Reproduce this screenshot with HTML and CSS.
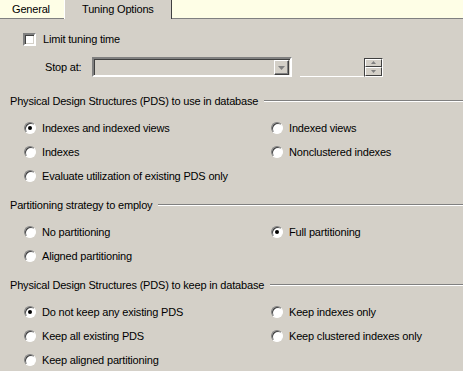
FILE: index.html
```html
<!DOCTYPE html>
<html>
<head>
<meta charset="utf-8">
<link rel="stylesheet" href="styles.css">
</head>
<body>
<div class="tabs">
  <div class="tab">General</div>
  <div class="tab active">Tuning Options</div>
  <div class="tab-fill"></div>
</div>

<div class="check-row">
  <span class="checkbox"></span>
  <span class="label">Limit tuning time</span>
</div>

<div class="stop-row">
  <span class="stop-label">Stop at:</span>
  <div class="combo">
    <div class="combo-btn">
      <svg width="7" height="4" viewBox="0 0 7 4"><path d="M0 0h7L3.5 4z" fill="#808080"/></svg>
    </div>
  </div>
  <div class="spin-text"></div>
  <div class="spin">
    <div class="spin-btn"><svg width="5" height="3" viewBox="0 0 5 3"><path d="M2.5 0L5 3H0z" fill="#808080"/></svg></div>
    <div class="spin-btn"><svg width="5" height="3" viewBox="0 0 5 3"><path d="M0 0h5L2.5 3z" fill="#808080"/></svg></div>
  </div>
</div>

<div class="group-head first"><span>Physical Design Structures (PDS) to use in database</span><span class="rule"></span></div>
<div class="options">
  <div class="opt"><span class="radio on"></span>Indexes and indexed views</div>
  <div class="opt"><span class="radio"></span>Indexed views</div>
  <div class="opt"><span class="radio"></span>Indexes</div>
  <div class="opt"><span class="radio"></span>Nonclustered indexes</div>
  <div class="opt"><span class="radio"></span>Evaluate utilization of existing PDS only</div>
</div>

<div class="group-head"><span>Partitioning strategy to employ</span><span class="rule"></span></div>
<div class="options">
  <div class="opt"><span class="radio"></span>No partitioning</div>
  <div class="opt"><span class="radio on"></span>Full partitioning</div>
  <div class="opt"><span class="radio"></span>Aligned partitioning</div>
</div>

<div class="group-head"><span>Physical Design Structures (PDS) to keep in database</span><span class="rule"></span></div>
<div class="options">
  <div class="opt"><span class="radio on"></span>Do not keep any existing PDS</div>
  <div class="opt"><span class="radio"></span>Keep indexes only</div>
  <div class="opt"><span class="radio"></span>Keep all existing PDS</div>
  <div class="opt"><span class="radio"></span>Keep clustered indexes only</div>
  <div class="opt"><span class="radio"></span>Keep aligned partitioning</div>
</div>
</body>
</html>
```

FILE: styles.css
```css
html, body {
  margin: 0;
  padding: 0;
}
body {
  width: 463px;
  height: 371px;
  overflow: hidden;
  background: #d4d0c8;
  font-family: "Liberation Sans", Arial, sans-serif;
  font-size: 11px;
  letter-spacing: -0.18px;
  color: #000;
}
.tabs {
  display: flex;
  height: 19px;
  background: #fefee6;
}
.tab {
  height: 18px;
  line-height: 19px;
  border-bottom: 1px solid #808080;
  padding: 0 12px;
  box-sizing: content-box;
  width: 40px;
}
.tab.active {
  background: #d4d0c8;
  border-bottom: none;
  height: 19px;
  border-left: 1px solid #fff;
  border-right: 1px solid #404040;
  width: 89px;
  padding: 0 0 0 17px;
  line-height: 18px;
}
.tab-fill {
  flex: 1;
  height: 18px;
  border-bottom: 1px solid #808080;
}
.check-row {
  display: flex;
  align-items: center;
  height: 16px;
  margin-top: 12px;
  padding-left: 23px;
}
.checkbox {
  width: 9px;
  height: 9px;
  background: #fff;
  border-style: solid;
  border-width: 2px;
  border-color: #808080 #fff #fff #808080;
  box-shadow: inset 1px 1px 0 #404040, inset -1px -1px 0 #d4d0c8;
  margin-right: 7px;
}
.stop-row {
  display: flex;
  align-items: center;
  height: 20px;
  margin-top: 10px;
  padding-left: 45px;
}
.stop-label {
  width: 47px;
}
.combo {
  width: 194px;
  border-style: solid;
  border-width: 2px;
  border-color: #808080 #fff #fff #808080;
  box-shadow: inset 1px 1px 0 #404040;
  display: flex;
  justify-content: flex-end;
  align-items: stretch;
  padding: 1px 1px 0 1px;
  box-sizing: content-box;
  height: 15px;
}
.combo-btn {
  width: 13px;
  border: 1px solid;
  border-color: #fff #404040 #404040 #fff;
  box-shadow: inset -1px -1px 0 #808080;
  background: #d4d0c8;
  display: flex;
  align-items: center;
  justify-content: center;
}
.spin-text {
  width: 64px;
  height: 19px;
  margin-left: 8px;
  border-bottom: 1px solid #fff;
  box-sizing: border-box;
}
.spin {
  width: 19px;
  height: 19px;
  box-sizing: border-box;
  border-style: solid;
  border-width: 1px;
  border-color: #404040 #fff #fff #404040;
  display: flex;
  flex-direction: column;
}
.spin-btn {
  flex: 1;
  border: 1px solid;
  border-color: #fff #404040 #404040 #fff;
  display: flex;
  align-items: center;
  justify-content: center;
}
.group-head {
  display: flex;
  align-items: center;
  height: 14px;
  margin-top: 14px;
  padding-left: 10px;
}
.group-head.first {
  margin-top: 17px;
}
.rule {
  flex: 1;
  height: 0;
  margin-left: 6px;
  border-top: 1px solid #808080;
  border-bottom: 1px solid #fff;
}
.options {
  display: grid;
  grid-template-columns: 247px 1fr;
  row-gap: 8px;
  padding-left: 24px;
  margin-top: 12px;
}
.opt {
  display: flex;
  align-items: center;
  height: 16px;
}
.radio {
  position: relative;
  width: 12px;
  height: 12px;
  border-radius: 50%;
  background: #fff;
  box-sizing: border-box;
  border: 1px solid;
  border-color: #808080 #fff #fff #808080;
  box-shadow: inset 1px 1px 0 #404040;
  margin-right: 6px;
}
.radio.on::after {
  content: "";
  position: absolute;
  left: 3px;
  top: 3px;
  width: 4px;
  height: 4px;
  border-radius: 50%;
  background: #000;
}
```
